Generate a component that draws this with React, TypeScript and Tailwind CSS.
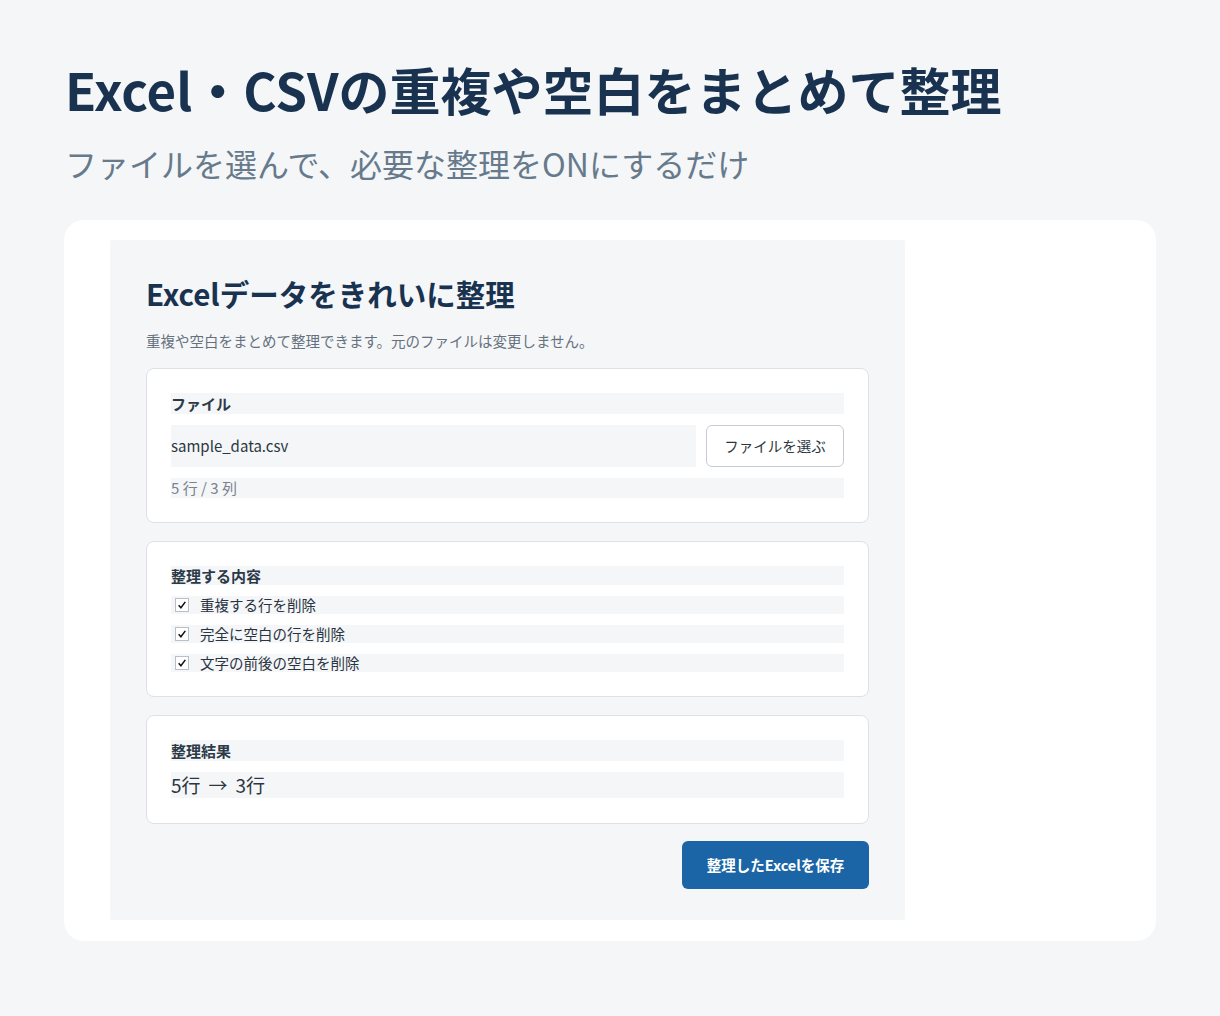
import React from "react"

const font = { fontFamily: '"Noto Sans CJK JP", "Noto Sans", sans-serif' }

function Check({ label }: { label: string }) {
  return (
    <div className="flex items-center h-[18px] bg-[#f4f6f8] pl-[4px]">
      <span className="w-[14px] h-[14px] border border-[#b9bfc6] bg-white flex items-center justify-center">
        <svg viewBox="0 0 12 12" className="w-[10px] h-[10px]" fill="none" stroke="#111" strokeWidth="1.8">
          <path d="M2 6.2 4.7 9.3 10 2.2" />
        </svg>
      </span>
      <span className="ml-[11px] text-[14.5px] leading-none text-[#2a3440]">{label}</span>
    </div>
  )
}

export default function App() {
  return (
    <div className="min-h-[1016px] bg-[#f4f6f8] px-[64px] pt-[56px] pb-[76px]" style={font}>
      <h1 className="ml-[1px] text-[51px] leading-[66px] font-bold text-[#18324f]">
        Excel・CSVの重複や空白をまとめて整理
      </h1>
      <p className="ml-[1px] mt-[19px] text-[32px] leading-[44px] text-[#677a8c]">
        ファイルを選んで、必要な整理をONにするだけ
      </p>

      <div className="mt-[35px] bg-white rounded-[20px] pl-[46px] pt-[20px] pb-[21px]">
        <div className="w-[795px] bg-[#f4f6f8] rounded-[2px] px-[36px] pt-[33px] pb-[31px]">
          <h2 className="text-[29.5px] leading-[40px] font-bold text-[#18324f]">
            Excelデータをきれいに整理
          </h2>
          <p className="mt-[18px] text-[14.5px] leading-[20px] text-[#66717d]">
            重複や空白をまとめて整理できます。元のファイルは変更しません。
          </p>

          <div className="mt-[17px] flex flex-col gap-[18px]">
            <div className="bg-white border border-[#dde2e8] rounded-[8px] px-[24px] pt-[24px] pb-[24px] flex flex-col gap-[11px]">
              <div className="h-[21px] bg-[#f4f6f8] text-[15px] leading-[21px] font-bold text-[#2c3a48]">ファイル</div>
              <div className="flex gap-[10px]">
                <div className="flex-1 h-[42px] bg-[#f4f6f8] flex items-center text-[15px] text-[#2c3640]">sample_data.csv</div>
                <button className="w-[138px] h-[42px] bg-white border border-[#c5ccd3] rounded-[6px] text-[14.5px] text-[#2c3640]">
                  ファイルを選ぶ
                </button>
              </div>
              <div className="h-[20px] bg-[#f4f6f8] text-[15px] leading-[20px] text-[#78838e]">5 行 / 3 列</div>
            </div>

            <div className="bg-white border border-[#dde2e8] rounded-[8px] px-[24px] pt-[24px] pb-[24px] flex flex-col gap-[11px]">
              <div className="h-[19px] bg-[#f4f6f8] text-[15px] leading-[19px] font-bold text-[#2c3a48]">整理する内容</div>
              <Check label="重複する行を削除" />
              <Check label="完全に空白の行を削除" />
              <Check label="文字の前後の空白を削除" />
            </div>

            <div className="bg-white border border-[#dde2e8] rounded-[8px] px-[24px] pt-[24px] pb-[25px] flex flex-col gap-[11px]">
              <div className="h-[21px] bg-[#f4f6f8] text-[15px] leading-[21px] font-bold text-[#2c3a48]">整理結果</div>
              <div className="h-[26px] bg-[#f4f6f8] text-[19px] leading-[26px] text-[#2c3640] flex items-center">
                <span>5行</span>
                <span className="mx-[8px]">→</span>
                <span>3行</span>
              </div>
            </div>
          </div>

          <div className="mt-[17px] flex justify-end">
            <button className="w-[187px] h-[48px] bg-[#1b65a6] rounded-[6px] text-white text-[14.5px] font-bold">
              整理したExcelを保存
            </button>
          </div>
        </div>
      </div>
    </div>
  )
}
